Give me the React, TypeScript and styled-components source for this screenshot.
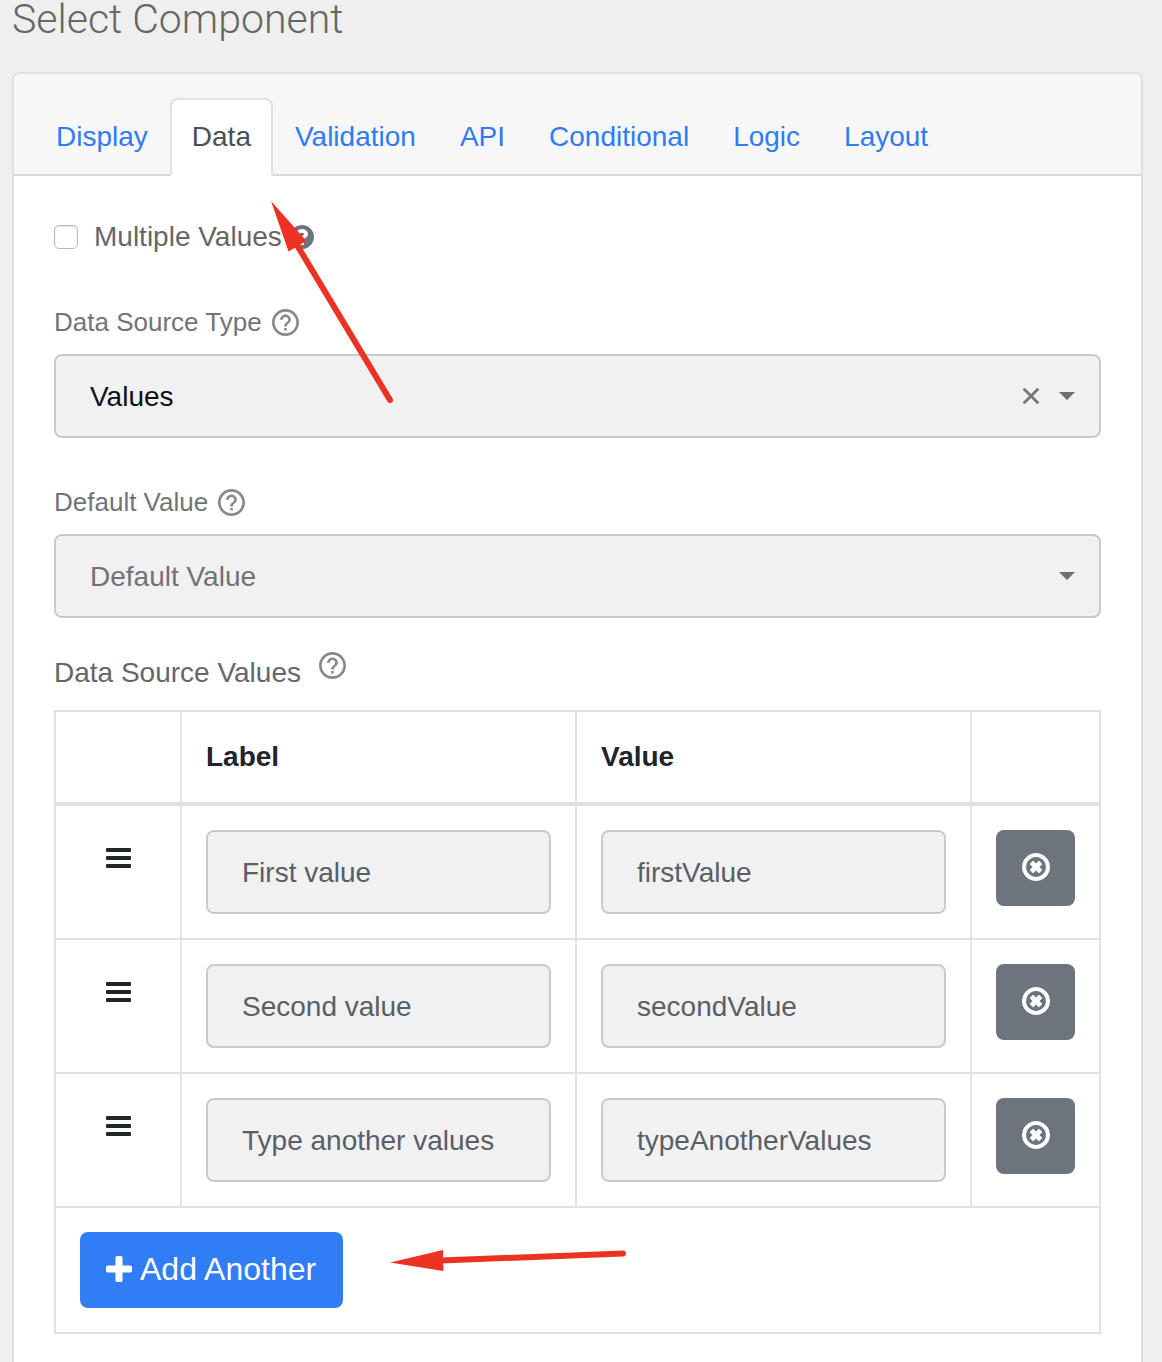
import React, { useState } from "react";
import styled, { createGlobalStyle } from "styled-components";

const GlobalStyle = createGlobalStyle`
  *, *::before, *::after { box-sizing: border-box; }
  body {
    margin: 0;
    background: #efefef;
    color: #666666;
    font-family: "Liberation Sans", Arial, sans-serif;
    font-size: 28px;
    line-height: 42px;
  }
  button, input, select { font: inherit; }
`;

const Page = styled.main`
  position: relative;
  display: flex;
  flex-direction: column;
  min-height: 100vh;
  padding: 0 19px 0 12px;
`;

const Title = styled.h1`
  margin: 0 0 34px;
  font-family: Roboto, "Liberation Sans", sans-serif;
  font-size: 41px;
  font-weight: 300;
  line-height: 38px;
`;

const Card = styled.section`
  flex: 1;
  border: 2px solid #dfdfdf;
  border-bottom: 0;
  border-radius: 8px 8px 0 0;
  background: #ffffff;
`;

const Tabs = styled.nav`
  display: flex;
  padding: 24px 20px 0;
  border-bottom: 2px solid #d8d8d8;
  border-radius: 6px 6px 0 0;
  background: #f7f7f7;
`;

const Tab = styled.a<{ $active: boolean }>`
  margin-bottom: -2px;
  padding: 16px 20px;
  border: 2px solid ${(p) => (p.$active ? "#dee2e6" : "transparent")};
  border-bottom-color: ${(p) => (p.$active ? "#ffffff" : "transparent")};
  border-radius: 8px 8px 0 0;
  background: ${(p) => (p.$active ? "#ffffff" : "transparent")};
  color: ${(p) => (p.$active ? "#495057" : "#307bf6")};
  text-decoration: none;
`;

const Body = styled.div`
  padding: 40px 40px 24px;
`;

const CheckRow = styled.div`
  display: flex;
  align-items: center;
  margin-bottom: 44px;
`;

const Checkbox = styled.input`
  appearance: none;
  width: 24px;
  height: 24px;
  margin: 0 16px 0 0;
  border: 1px solid #b9b9b9;
  border-radius: 5px;
  background: #ffffff;
  box-shadow: inset 0 1px 2px #dddddd;
  &:checked { background: #307bf6; }
`;

const SolidHelp = styled.svg`
  width: 24px;
  height: 24px;
  margin-left: 8px;
  fill: #6c757d;
`;

const Field = styled.div`
  margin-bottom: 44px;
  &:last-of-type { margin-bottom: 34px; }
`;

const FieldHead = styled.div`
  display: flex;
  align-items: center;
  gap: 10px;
  height: 40px;
  margin-bottom: 12px;
  color: #707479;
  font-size: 26px;
`;

const SectionHead = styled.div`
  display: flex;
  align-items: flex-start;
  gap: 18px;
  margin-bottom: 16px;
`;

const SectionTitle = styled.h2`
  margin: 0;
  font-size: 28px;
  font-weight: 400;
`;

const OutlineHelp = styled.svg`
  width: 27px;
  height: 27px;
  fill: #88898c;
`;

const SelectBox = styled.div`
  display: flex;
  align-items: center;
  height: 84px;
  padding-right: 24px;
  border: 2px solid #cacaca;
  border-radius: 8px;
  background: #f1f1f1;
`;

const Select = styled.select<{ $empty: boolean }>`
  appearance: none;
  flex: 1;
  min-width: 0;
  height: 100%;
  padding: 2px 34px 0;
  border: 0;
  background: transparent;
  color: ${(p) => (p.$empty ? "#6f7278" : "#0c1018")};
`;

const ClearButton = styled.button`
  display: flex;
  margin: 0 20px 0 0;
  padding: 0;
  border: 0;
  background: transparent;
  cursor: pointer;
`;

const Grid = styled.table`
  width: 100%;
  border-collapse: collapse;
  table-layout: fixed;
  color: #212529;
`;

const Column = styled.col<{ $width?: number }>`
  width: ${(p) => (p.$width ? `${p.$width}px` : "auto")};
`;

const HeadCell = styled.th`
  padding: 24px;
  border: 2px solid #dee2e6;
  border-bottom-width: 4px;
  text-align: left;
`;

const Cell = styled.td<{ $center?: boolean }>`
  padding: 24px;
  border: 2px solid #dee2e6;
  text-align: ${(p) => (p.$center ? "center" : "left")};
  vertical-align: top;
`;

const TextInput = styled.input`
  display: block;
  width: 100%;
  height: 84px;
  padding: 2px 34px 0;
  border: 2px solid #cacaca;
  border-radius: 8px;
  background: #f1f1f1;
  color: #5a5e66;
`;

const DragHandle = styled.button`
  display: flex;
  align-items: center;
  justify-content: center;
  width: 100%;
  height: 56px;
  padding: 0;
  border: 0;
  background: transparent;
  color: #212529;
  cursor: move;
`;

const SolidButton = styled.button<{ $tone: "primary" | "secondary" }>`
  display: flex;
  align-items: center;
  justify-content: center;
  gap: 8px;
  width: ${(p) => (p.$tone === "secondary" ? "100%" : "auto")};
  height: 76px;
  padding: ${(p) => (p.$tone === "secondary" ? "0 0 2px" : "0 27px 2px 26px")};
  border: 0;
  border-radius: 8px;
  background: ${(p) => (p.$tone === "secondary" ? "#6c757d" : "#307df6")};
  color: #ffffff;
  font-size: 32px;
  cursor: pointer;
`;

const Annotation = styled.svg`
  position: absolute;
  top: 0;
  left: 0;
  width: 700px;
  height: 1300px;
  pointer-events: none;
`;

const HelpIcon = () => (
  <OutlineHelp viewBox="2 2 20 20" aria-hidden="true">
    <path d="M11 18h2v-2h-2v2zm1-16C6.48 2 2 6.48 2 12s4.48 10 10 10 10-4.48 10-10S17.52 2 12 2zm0 18c-4.41 0-8-3.59-8-8s3.59-8 8-8 8 3.59 8 8-3.59 8-8 8zm0-14c-2.21 0-4 1.79-4 4h2c0-1.1.9-2 2-2s2 .9 2 2c0 2-3 1.75-3 5h2c0-2.25 3-2.5 3-5 0-2.21-1.79-4-4-4z" />
  </OutlineHelp>
);

const SolidHelpIcon = () => (
  <SolidHelp viewBox="128 128 1536 1536" aria-hidden="true">
    <path d="M1024 1376v-192q0-14-9-23t-23-9h-192q-14 0-23 9t-9 23v192q0 14 9 23t23 9h192q14 0 23-9t9-23zm256-672q0-88-55.5-163t-138.5-116-170-41q-243 0-371 213-15 24 8 42l132 100q7 6 19 6 16 0 25-12 53-68 86-92 34-24 86-24 48 0 85.5 26t37.5 59q0 38-20 61t-68 45q-63 28-115.5 86.5t-52.5 125.5v36q0 14 9 23t23 9h192q14 0 23-9t9-23q0-19 21.5-49.5t54.5-49.5q32-18 49-28.5t46-35 44.5-48 28-60.5 12.5-81zm384 192q0 209-103 385.5t-279.5 279.5-385.5 103-385.5-103-279.5-279.5-103-385.5 103-385.5 279.5-279.5 385.5-103 385.5 103 279.5 279.5 103 385.5z" />
  </SolidHelp>
);

const CaretIcon = () => (
  <svg width="16" height="8" viewBox="0 0 16 8" fill="#6b6f77" aria-hidden="true">
    <path d="M0 0h16L8 8z" />
  </svg>
);

const CrossIcon = () => (
  <svg width="16" height="16" viewBox="0 0 16 16" fill="none" stroke="#75777a" strokeWidth="2.8" strokeLinecap="round" aria-hidden="true">
    <path d="M1.5 1.5l13 13M14.5 1.5l-13 13" />
  </svg>
);

const BarsIcon = () => (
  <svg width="25" height="20" viewBox="0 0 25 20" fill="currentColor" aria-hidden="true">
    <rect width="25" height="4" rx="1" />
    <rect y="8" width="25" height="4" rx="1" />
    <rect y="16" width="25" height="4" rx="1" />
  </svg>
);

const RemoveIcon = () => (
  <svg width="28" height="28" viewBox="128 128 1536 1536" fill="currentColor" aria-hidden="true">
    <path d="M1225 1079l-146 146q-10 10-23 10t-23-10l-137-137-137 137q-10 10-23 10t-23-10l-146-146q-10-10-10-23t10-23l137-137-137-137q-10-10-10-23t10-23l146-146q10-10 23-10t23 10l137 137 137-137q10-10 23-10t23 10l146 146q10 10 10 23t-10 23l-137 137 137 137q10 10 10 23t-10 23zm215-183q0-148-73-273t-198-198-273-73-273 73-198 198-73 273 73 273 198 198 273 73 273-73 198-198 73-273zm224 0q0 209-103 385.5t-279.5 279.5-385.5 103-385.5-103-279.5-279.5-103-385.5 103-385.5 279.5-279.5 385.5-103 385.5 103 279.5 279.5 103 385.5z" />
  </svg>
);

const PlusIcon = () => (
  <svg width="26" height="26" viewBox="192 128 1408 1408" fill="currentColor" aria-hidden="true">
    <path d="M1600 736v192q0 40-28 68t-68 28h-416v416q0 40-28 68t-68 28h-192q-40 0-68-28t-28-68v-416h-416q-40 0-68-28t-28-68v-192q0-40 28-68t68-28h416v-416q0-40 28-68t68-28h192q40 0 68 28t28 68v416h416q40 0 68 28t28 68z" />
  </svg>
);

const TABS = ["Display", "Data", "Validation", "API", "Conditional", "Logic", "Layout"];

const INITIAL_ROWS = [
  { id: 1, label: "First value", value: "firstValue" },
  { id: 2, label: "Second value", value: "secondValue" },
  { id: 3, label: "Type another values", value: "typeAnotherValues" },
];

export default function App() {
  const [active, setActive] = useState("Data");
  const [source, setSource] = useState("values");
  const [rows, setRows] = useState(INITIAL_ROWS);

  const update = (id: number, key: "label" | "value", text: string) =>
    setRows(rows.map((row) => (row.id === id ? { ...row, [key]: text } : row)));

  return (
    <Page>
      <GlobalStyle />
      <Title>Select Component</Title>
      <Card>
        <Tabs>
          {TABS.map((name) => (
            <Tab
              key={name}
              href={`#${name.toLowerCase()}`}
              $active={name === active}
              onClick={() => setActive(name)}
            >
              {name}
            </Tab>
          ))}
        </Tabs>
        <Body>
          <CheckRow>
            <Checkbox type="checkbox" id="multiple" />
            <label htmlFor="multiple">Multiple Values</label>
            <SolidHelpIcon />
          </CheckRow>

          <Field>
            <FieldHead>
              <label htmlFor="source">Data Source Type</label>
              <HelpIcon />
            </FieldHead>
            <SelectBox>
              <Select
                id="source"
                $empty={source === ""}
                value={source}
                onChange={(e) => setSource(e.target.value)}
              >
                <option value="" />
                <option value="values">Values</option>
              </Select>
              <ClearButton type="button" aria-label="Clear" onClick={() => setSource("")}>
                <CrossIcon />
              </ClearButton>
              <CaretIcon />
            </SelectBox>
          </Field>

          <Field>
            <FieldHead>
              <label htmlFor="default">Default Value</label>
              <HelpIcon />
            </FieldHead>
            <SelectBox>
              <Select id="default" $empty defaultValue="">
                <option value="">Default Value</option>
              </Select>
              <CaretIcon />
            </SelectBox>
          </Field>

          <SectionHead as="header">
            <SectionTitle>Data Source Values</SectionTitle>
            <HelpIcon />
          </SectionHead>
          <Grid>
            <colgroup>
              <Column $width={126} />
              <Column />
              <Column />
              <Column $width={129} />
            </colgroup>
            <thead>
              <tr>
                <HeadCell />
                <HeadCell scope="col">Label</HeadCell>
                <HeadCell scope="col">Value</HeadCell>
                <HeadCell />
              </tr>
            </thead>
            <tbody>
              {rows.map((row) => (
                <tr key={row.id}>
                  <Cell $center>
                    <DragHandle type="button" aria-label="Reorder">
                      <BarsIcon />
                    </DragHandle>
                  </Cell>
                  <Cell>
                    <TextInput
                      aria-label="Label"
                      value={row.label}
                      onChange={(e) => update(row.id, "label", e.target.value)}
                    />
                  </Cell>
                  <Cell>
                    <TextInput
                      aria-label="Value"
                      value={row.value}
                      onChange={(e) => update(row.id, "value", e.target.value)}
                    />
                  </Cell>
                  <Cell>
                    <SolidButton
                      type="button"
                      $tone="secondary"
                      aria-label="Remove"
                      onClick={() => setRows(rows.filter((r) => r.id !== row.id))}
                    >
                      <RemoveIcon />
                    </SolidButton>
                  </Cell>
                </tr>
              ))}
            </tbody>
            <tfoot>
              <tr>
                <Cell colSpan={4}>
                  <SolidButton
                    type="button"
                    $tone="primary"
                    onClick={() => setRows([...rows, { id: Date.now(), label: "", value: "" }])}
                  >
                    <PlusIcon />
                    Add Another
                  </SolidButton>
                </Cell>
              </tr>
            </tfoot>
          </Grid>
        </Body>
      </Card>
      <Annotation viewBox="0 0 700 1300" fill="#ec3323" stroke="#ec3323" aria-hidden="true">
        <path stroke="none" d="M271 201L306.500 241L288.500 251.500z" />
        <path strokeWidth="6" strokeLinecap="round" d="M297 245L390 400" />
        <path stroke="none" d="M390 1262.500L443 1250L443.500 1271z" />
        <path strokeWidth="6" strokeLinecap="round" d="M441 1260.500L623 1253.500" />
      </Annotation>
    </Page>
  );
}
